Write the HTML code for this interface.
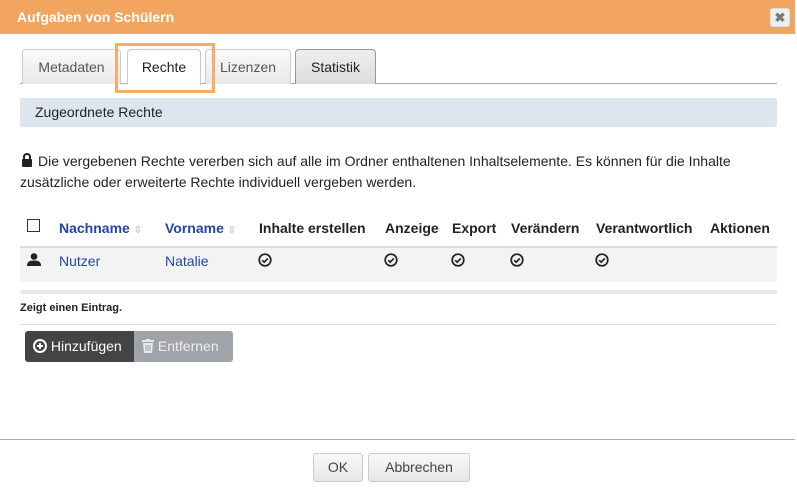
<!DOCTYPE html>
<html><head><meta charset="utf-8"><style>
*{box-sizing:border-box;margin:0;padding:0}
body{width:797px;height:494px;background:#fff;font-family:"Liberation Sans",sans-serif;color:#222;position:relative;overflow:hidden;font-size:14px}
.a{position:absolute;white-space:nowrap}
.hdr{left:0;top:0;width:795px;height:34px;background:#f1a55e}
.tab{position:absolute;top:49px;height:35px;border:1px solid #ccc;border-bottom:none;border-radius:4px 4px 0 0;background:linear-gradient(#fafafa,#e8e8e8);font-size:14px;color:#555;text-align:center;line-height:34px}
.btn{position:absolute;border:1px solid #ccc;border-radius:3px;background:linear-gradient(#f8f8f8,#e6e6e6);color:#444;font-size:14px;text-align:center;line-height:27px;top:453px;height:29px}
</style></head><body>
<svg width="0" height="0" style="position:absolute"><symbol id="ck" viewBox="0 0 14 14"><circle cx="7" cy="7" r="5.8" fill="none" stroke="#222" stroke-width="1.7"/><path d="M4.2 7.2l2 2 3.6-3.8" fill="none" stroke="#222" stroke-width="1.7"/></symbol></svg>
<div class="a hdr"></div>
<div class="a" style="left:17px;top:9px;color:#fff;font-weight:bold;font-size:14px">Aufgaben von Schülern</div>
<div class="a" style="left:770px;top:8px;width:20px;height:19px;background:#eee;border:1px solid #ddd;border-radius:3px;color:#777;font-weight:bold;font-size:13px;text-align:center;line-height:17px">✖</div>

<div class="a" style="left:20px;top:83px;width:757px;height:1px;background:#aaa"></div>
<div class="tab" style="left:22px;width:99px">Metadaten</div>
<div class="tab" style="left:127px;width:74px;background:#fff;border-color:#b8cde0;color:#222;height:36px">Rechte</div>
<div class="tab" style="left:205px;width:86px">Lizenzen</div>
<div class="tab" style="left:295px;width:81px;border-color:#999;background:linear-gradient(#eee,#ddd);color:#222">Statistik</div>
<div class="a" style="left:115px;top:43px;width:100px;height:50px;border:3px solid #f7ad63"></div>

<div class="a" style="left:20px;top:98px;width:757px;height:29px;background:#dde6ee;border-radius:2px"></div>
<div class="a" style="left:35px;top:104px;font-size:14px">Zugeordnete Rechte</div>

<svg class="a" style="left:21px;top:153px" width="12" height="14" viewBox="0 0 12 14"><path d="M3 6V4a3 3 0 0 1 6 0v2" fill="none" stroke="#222" stroke-width="2"/><rect x="1" y="6" width="10" height="8" rx="1" fill="#222"/></svg>
<div class="a" style="left:38px;top:153px;font-size:14px">Die vergebenen Rechte vererben sich auf alle im Ordner enthaltenen Inhaltselemente. Es können für die Inhalte</div>
<div class="a" style="left:20px;top:174px;font-size:14px">zusätzliche oder erweiterte Rechte individuell vergeben werden.</div>

<div class="a" style="left:27px;top:219px;width:13px;height:13px;border:1.5px solid #333"></div>
<div class="a" style="left:59px;top:220px;font-weight:bold;color:#2347a5">Nachname <span style="color:#aaa;font-size:10px;font-weight:normal">⇳</span></div>
<div class="a" style="left:165px;top:220px;font-weight:bold;color:#2347a5">Vorname <span style="color:#aaa;font-size:10px;font-weight:normal">⇳</span></div>
<div class="a" style="left:259px;top:220px;font-weight:bold">Inhalte erstellen</div>
<div class="a" style="left:385px;top:220px;font-weight:bold">Anzeige</div>
<div class="a" style="left:452px;top:220px;font-weight:bold">Export</div>
<div class="a" style="left:511px;top:220px;font-weight:bold">Verändern</div>
<div class="a" style="left:596px;top:220px;font-weight:bold">Verantwortlich</div>
<div class="a" style="left:710px;top:220px;font-weight:bold">Aktionen</div>
<div class="a" style="left:20px;top:246px;width:757px;height:2px;background:#ddd"></div>
<div class="a" style="left:20px;top:248px;width:757px;height:34px;background:#f3f3f3"></div>
<svg class="a" style="left:27px;top:253px" width="14" height="13" viewBox="0 0 14 13"><circle cx="7" cy="3.5" r="3.3" fill="#222"/><path d="M0 13c0-4 2-5.5 7-5.5s7 1.5 7 5.5z" fill="#222"/></svg>
<div class="a" style="left:59px;top:253px;color:#2347a5">Nutzer</div>
<div class="a" style="left:165px;top:253px;color:#2347a5">Natalie</div>
<svg class="a" style="left:258px;top:253px" width="14" height="14"><use href="#ck"/></svg>
<svg class="a" style="left:384px;top:253px" width="14" height="14"><use href="#ck"/></svg>
<svg class="a" style="left:451px;top:253px" width="14" height="14"><use href="#ck"/></svg>
<svg class="a" style="left:510px;top:253px" width="14" height="14"><use href="#ck"/></svg>
<svg class="a" style="left:595px;top:253px" width="14" height="14"><use href="#ck"/></svg>
<div class="a" style="left:21px;top:290px;width:756px;height:4px;background:#e8e8e8"></div>
<div class="a" style="left:20px;top:302px;font-size:11px;font-weight:bold">Zeigt einen Eintrag.</div>
<div class="a" style="left:20px;top:324px;width:757px;height:1px;background:#ddd"></div>
<div class="a" style="left:25px;top:331px;width:109px;height:31px;background:#444;border-radius:3px 0 0 3px;color:#fff;line-height:31px;padding-left:8px">
<span style="display:inline-block;width:14px;height:14px;border:2px solid #fff;border-radius:50%;vertical-align:-2px;position:relative"><span style="position:absolute;left:2px;top:4px;width:6px;height:2px;background:#fff"></span><span style="position:absolute;left:4px;top:2px;width:2px;height:6px;background:#fff"></span></span> Hinzufügen</div>
<div class="a" style="left:134px;top:331px;width:99px;height:31px;background:#a0a3a8;border-radius:0 3px 3px 0;color:#eee;line-height:31px;padding-left:8px"><svg width="12" height="14" viewBox="0 0 12 14" style="vertical-align:-2px"><rect x="0" y="1" width="12" height="2" fill="#e8e8e8"/><rect x="4" y="0" width="4" height="2" fill="#e8e8e8"/><path d="M1 4h10l-1 10H2z" fill="#e8e8e8"/><path d="M4 6v6M6 6v6M8 6v6" stroke="#a0a3a8" stroke-width="1"/></svg> Entfernen</div>

<div class="a" style="left:0;top:439px;width:795px;height:1px;background:#aaa"></div>
<div class="btn" style="left:313px;width:50px">OK</div>
<div class="btn" style="left:368px;width:102px">Abbrechen</div>
</body></html>
